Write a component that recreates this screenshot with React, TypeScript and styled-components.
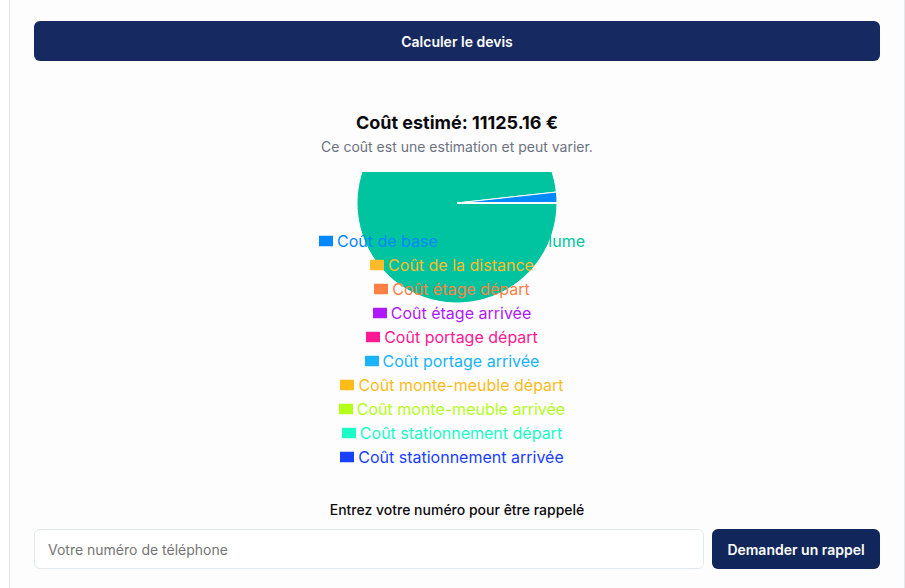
import styled, { createGlobalStyle } from 'styled-components';

type LegendItem = { label: string; color: string };

const rows: LegendItem[][] = [
    [
        { label: 'Coût de base', color: '#0088fe' },
        { label: 'Coût du volume', color: '#00c49f' },
    ],
    [{ label: 'Coût de la distance', color: '#ffbb28' }],
    [{ label: 'Coût étage départ', color: '#ff8042' }],
    [{ label: 'Coût étage arrivée', color: '#af19ff' }],
    [{ label: 'Coût portage départ', color: '#ff1994' }],
    [{ label: 'Coût portage arrivée', color: '#19b3ff' }],
    [{ label: 'Coût monte-meuble départ', color: '#ffbb19' }],
    [{ label: 'Coût monte-meuble arrivée', color: '#b3ff19' }],
    [{ label: 'Coût stationnement départ', color: '#19ffc6' }],
    [{ label: 'Coût stationnement arrivée', color: '#1940ff' }],
];

export default function App() {
    return (
        <>
            <GlobalStyle />
            <Page>
                <Card>
                    <PrimaryButton type="button">Calculer le devis</PrimaryButton>

                    <Result>
                        <Title>Coût estimé: 11125.16 €</Title>
                        <Subtitle>
                            Ce coût est une estimation et peut varier.
                        </Subtitle>
                    </Result>

                    <ChartArea>
                        <Pie width="202" height="202" viewBox="-1 -1 202 202">
                            <path
                                d="M100,100 L199.4,89.03 A100,100 0 1,0 200,100 Z"
                                fill="#00c49f"
                                stroke="#fff"
                                strokeWidth="1"
                            />
                            <path
                                d="M100,100 L200,100 A100,100 0 0,0 199.4,89.03 Z"
                                fill="#0088fe"
                                stroke="#fff"
                                strokeWidth="1"
                            />
                            <line
                                x1="100"
                                y1="100"
                                x2="200"
                                y2="100"
                                stroke="#fff"
                                strokeWidth="2"
                            />
                        </Pie>
                        <Legend>
                            {rows.map((row, i) => (
                                <LegendRow key={i}>
                                    {row.map((item) => (
                                        <LegendEntry
                                            key={item.label}
                                            $color={item.color}
                                        >
                                            <svg
                                                width="14"
                                                height="14"
                                                viewBox="0 0 32 32"
                                            >
                                                <path
                                                    d="M0,4h32v24h-32z"
                                                    fill={item.color}
                                                />
                                            </svg>
                                            {item.label}
                                        </LegendEntry>
                                    ))}
                                </LegendRow>
                            ))}
                        </Legend>
                    </ChartArea>

                    <Callback>
                        <CallbackLabel>
                            Entrez votre numéro pour être rappelé
                        </CallbackLabel>
                        <CallbackForm>
                            <PhoneInput
                                type="tel"
                                placeholder="Votre numéro de téléphone"
                            />
                            <CallbackButton type="button">
                                Demander un rappel
                            </CallbackButton>
                        </CallbackForm>
                    </Callback>
                </Card>
            </Page>
        </>
    );
}

const GlobalStyle = createGlobalStyle`
    body {
        margin: 0;
        background: #ffffff;
        font-family: Inter, "Noto Sans", sans-serif;
        color: #111827;
    }
`;

const Page = styled.div`
    padding-left: 9px;
    height: 588px;
    overflow: hidden;
`;

const Card = styled.div`
    box-sizing: border-box;
    width: 896px;
    min-height: 600px;
    background: #fdfdfe;
    border: 1px solid #e5e7eb;
    border-top: none;
    padding: 21px 24px 20px 24px;
`;

const PrimaryButton = styled.button`
    display: block;
    width: 100%;
    height: 40px;
    border: none;
    border-radius: 6px;
    background: #162a61;
    color: #ffffff;
    font-family: Inter, sans-serif;
    font-size: 14px;
    font-weight: 600;
    cursor: pointer;
`;

const Result = styled.div`
    margin-top: 48px;
    text-align: center;
`;

const Title = styled.h2`
    margin: 0;
    font-size: 18px;
    line-height: 28px;
    font-weight: 700;
    color: #0b0b0f;
`;

const Subtitle = styled.p`
    margin: 0;
    font-size: 14px;
    line-height: 20px;
    color: #6b7280;
`;

const ChartArea = styled.div`
    position: relative;
    margin-top: 15px;
    padding-top: 57px;
    overflow: hidden;
`;

const Pie = styled.svg`
    position: absolute;
    top: -70px;
    left: 50%;
    margin-left: -101px;
`;

const Legend = styled.div`
    position: relative;
    z-index: 1;
    display: flex;
    flex-direction: column;
`;

const LegendRow = styled.div`
    display: flex;
    justify-content: center;
    height: 24px;
`;

const LegendEntry = styled.span<{ $color: string }>`
    display: inline-flex;
    align-items: center;
    margin-right: 10px;
    font-size: 16px;
    line-height: 24px;
    color: ${(p) => p.$color};

    svg {
        margin-right: 4px;
    }
`;

const Callback = styled.div`
    margin-top: 31px;
`;

const CallbackLabel = styled.p`
    margin: 0;
    text-align: center;
    font-size: 14px;
    line-height: 20px;
    font-weight: 500;
    color: #0b0b0f;
`;

const CallbackForm = styled.div`
    display: flex;
    gap: 8px;
    margin-top: 9px;
`;

const PhoneInput = styled.input`
    flex: 1;
    box-sizing: border-box;
    height: 40px;
    padding: 0 13px;
    border: 1px solid #e2e8f0;
    border-radius: 6px;
    background: #ffffff;
    font-family: Inter, sans-serif;
    font-size: 14px;
    color: #111827;

    ::placeholder {
        color: #6b7280;
    }
`;

const CallbackButton = styled.button`
    width: 168px;
    height: 40px;
    border: none;
    border-radius: 6px;
    background: #11265b;
    color: #ffffff;
    font-family: Inter, sans-serif;
    font-size: 14px;
    font-weight: 600;
    cursor: pointer;
`;
